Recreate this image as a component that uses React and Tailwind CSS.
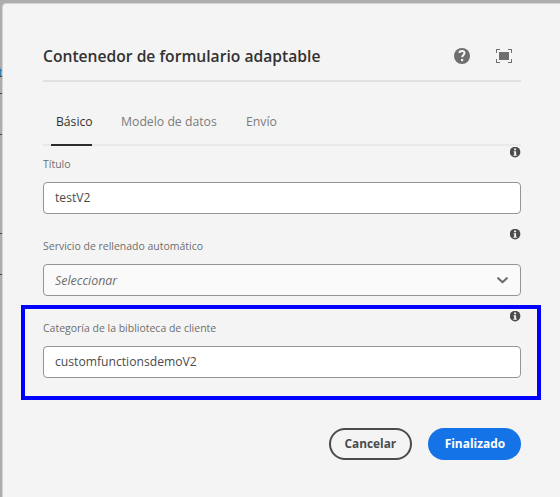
function HelpIcon() {
  return (
    <svg width="16" height="16" viewBox="0 0 16 16">
      <circle cx="8" cy="8" r="8" fill="#6e6e6e" />
      <path d="M5.600 5V3.800C6.200 3.200 7.100 3 8.100 3c1.500 0 2.400.9 2.400 2.100 0 1.800-2.300 2-2.300 4.200" fill="none" stroke="#f5f5f5" strokeWidth="2" />
      <rect x="7" y="11" width="2.200" height="2.200" fill="#f5f5f5" />
    </svg>
  );
}

function FullscreenIcon() {
  return (
    <svg width="16" height="14" viewBox="0 0 16 14" shapeRendering="crispEdges">
      <rect x="3" y="3" width="10" height="8" fill="#6e6e6e" />
      <path d="M.5 4V.5H4M12 .5h3.500V4M15.500 10v3.500H12M4 13.500H.5V10" fill="none" stroke="#6e6e6e" />
    </svg>
  );
}

function InfoIcon() {
  return (
    <svg className="block" width="11" height="11" viewBox="0 0 11 11">
      <circle cx="5.100" cy="5.100" r="5.300" fill="#4b4b4b" />
      <path d="M4.100 1.500h2v1.700h-2zM3.600 4.200h2.500v3.500H6.800v1H3.400v-1h.8V5.200H3.600z" fill="#f5f5f5" />
    </svg>
  );
}

function Field({ label, children }) {
  return (
    <div className="h-[82px]">
      <div className="flex h-[36px] justify-between">
        <label className="origin-left scale-x-[0.911] pt-[9px] text-[11.500px] leading-[18px] whitespace-nowrap text-[#6e6e6e]">{label}</label>
        <div className="pt-[1px]">
          <InfoIcon />
        </div>
      </div>
      {children}
    </div>
  );
}

const box = "flex h-8 items-center rounded-[4px] border border-[#959595] pl-[11px]";

export default function App() {
  return (
    <div className="relative h-[497px] w-[560px] overflow-hidden bg-[#adadad] pt-[3px] pl-[2px] font-['Open_Sans','Noto_Sans',sans-serif]">
      <div className="absolute top-[64px] left-[-2px] text-[13px] leading-[16px] font-semibold text-[#2f76b0]">t</div>
      <div className="absolute top-[76px] left-0 h-px w-[2px] bg-[#444]" />
      <div className="absolute top-[93px] left-0 h-px w-[2px] bg-[#444]" />
      <div className="absolute top-[134px] left-0 h-px w-[2px] bg-[#444]" />
      <div className="absolute top-[233px] left-0 h-px w-[2px] bg-[#444]" />
      <div className="absolute top-[274px] left-0 h-px w-[2px] bg-[#444]" />
      <div className="relative h-[510px] w-[562px] rounded-tl-[4px] border border-[#d4d4d4] bg-[#f4f4f4] pl-10">
        <div className="w-[478px]">
          <header className="flex h-[78px] items-center justify-between border-b-2 border-[#e1e1e1] pt-[28px]">
            <h1 className="origin-left scale-x-[0.92] text-[17px] leading-6 font-semibold whitespace-nowrap text-[#323232]">Contenedor de formulario adaptable</h1>
            <div className="flex items-center gap-[26px] pr-[9px]">
              <HelpIcon />
              <FullscreenIcon />
            </div>
          </header>
          <nav className="flex h-16 border-b-2 border-[#e9e9e9] pl-2 text-[13.500px] leading-5 text-[#7c7c7c]">
            <div className="h-16 w-[41px] border-b-2 border-[#2c2c2c] pt-[29px] pl-[5px] text-[#323232]">
              <span className="inline-block origin-left scale-x-[0.9] whitespace-nowrap">Básico</span>
            </div>
            <div className="ml-[29px] w-[125px] pt-[29px]">
              <span className="inline-block origin-left scale-x-[0.907] whitespace-nowrap">Modelo de datos</span>
            </div>
            <div className="pt-[29px]">
              <span className="inline-block origin-left scale-x-[0.91] whitespace-nowrap">Envío</span>
            </div>
          </nav>
          <Field label="Título">
            <div className={`${box} bg-white pb-px text-[13.500px] text-[#4b4b4b]`}>
              <span className="origin-left scale-x-[0.9]">testV2</span>
            </div>
          </Field>
          <Field label="Servicio de rellenado automático">
            <div className={`${box} justify-between bg-[#fafafa] pr-3 text-[13.500px] text-[#6e6e6e]`}>
              <span className="origin-left scale-x-[0.92] italic">Seleccionar</span>
              <svg width="11" height="7" viewBox="0 0 11 7">
                <path d="M1.200 1.200 5.500 5.200 9.800 1.200" fill="none" stroke="#6e6e6e" strokeWidth="2.200" strokeLinecap="round" strokeLinejoin="round" />
              </svg>
            </div>
          </Field>
          <Field label="Categoría de la biblioteca de cliente">
            <div className={`${box} bg-white pb-px text-[13.500px] text-[#4b4b4b]`}>
              <span className="origin-left scale-x-[0.9]">customfunctionsdemoV2</span>
            </div>
          </Field>
          <footer className="flex justify-end gap-4 pt-[36px] text-[13px] font-bold">
            <button className="h-8 w-[83px] rounded-full border-2 border-[#4b4b4b] pb-[2px] leading-[26px] text-[#4b4b4b]">
              <span className="inline-block scale-x-[0.91]">Cancelar</span>
            </button>
            <button className="h-8 w-[93px] rounded-full bg-[#1473e6] pb-[2px] leading-[30px] text-white">
              <span className="inline-block scale-x-[0.92]">Finalizado</span>
            </button>
          </footer>
        </div>
      </div>
      <div className="absolute top-[305px] left-[21px] h-[95px] w-[520px] border-4 border-[#0000ff]" />
    </div>
  );
}
